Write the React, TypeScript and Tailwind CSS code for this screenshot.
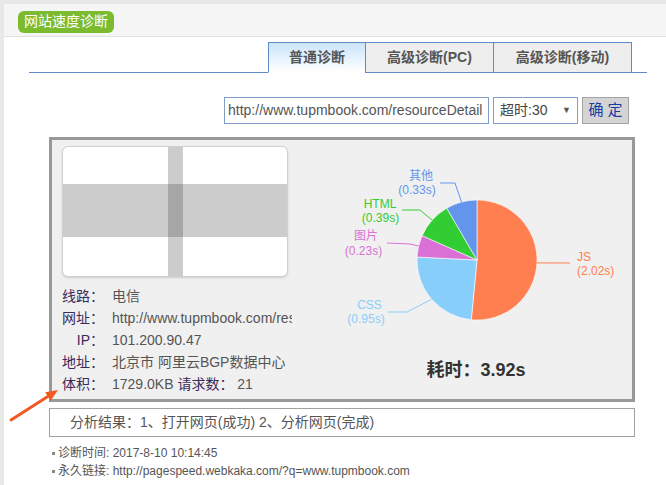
import React from 'react'

const FONT = "font-['Liberation_Sans','Noto_Sans_CJK_SC',sans-serif]"

const tabs = [
  { label: '普通诊断', width: 'w-[97px]', active: true },
  { label: '高级诊断(PC)', width: 'w-[128px]', active: false },
  { label: '高级诊断(移动)', width: 'w-[139px] border-r', active: false },
]

// pie slices, clockwise from 12 o'clock (center 147,110 r 60)
const slices = [
  { d: 'M147,110 L147,50 A60,60 0 1,1 141.25,169.72 Z', color: '#ff7f50' },
  { d: 'M147,110 L141.25,169.72 A60,60 0 0,1 87.07,107.07 Z', color: '#87cefa' },
  { d: 'M147,110 L87.07,107.07 A60,60 0 0,1 92.15,85.67 Z', color: '#da70d6' },
  { d: 'M147,110 L92.15,85.67 A60,60 0 0,1 116.76,58.18 Z', color: '#32cd32' },
  { d: 'M147,110 L116.76,58.18 A60,60 0 0,1 147,50 Z', color: '#6495ed' },
]

const labels = [
  { line: '131.5,52 125,33 110,33', color: '#6495ed', a: { x: 91, y: 30, t: '其他' }, b: { x: 87, y: 44, t: '(0.33s)' }, anchor: 'middle' },
  { line: '102,70 90,60 72,60', color: '#32cd32', a: { x: 50, y: 58, t: 'HTML' }, b: { x: 50.5, y: 72, t: '(0.39s)' }, anchor: 'middle' },
  { line: '88.6,96 80,94 57,93', color: '#da70d6', a: { x: 36, y: 90, t: '图片' }, b: { x: 33.5, y: 105, t: '(0.23s)' }, anchor: 'middle' },
  { line: '101.6,149.3 77,162 58,162', color: '#87cefa', a: { x: 39.5, y: 159, t: 'CSS' }, b: { x: 36, y: 173, t: '(0.95s)' }, anchor: 'middle' },
  { line: '206.9,112.9 240,113', color: '#ff7f50', a: { x: 247, y: 111, t: 'JS' }, b: { x: 247, y: 125, t: '(2.02s)' }, anchor: 'start' },
]

const PieChart: React.FC = () => (
  <svg width="290" height="200" viewBox="0 0 290 200" className="block">
    {slices.map((s, i) => (
      <path key={i} d={s.d} fill={s.color} stroke="#fff" strokeWidth="0.6" />
    ))}
    {labels.map((l, i) => (
      <g key={i} fill={l.color} fontSize="12" fontFamily="'Liberation Sans','Noto Sans CJK SC',sans-serif">
        <polyline points={l.line} fill="none" stroke={l.color} strokeWidth="1" />
        <text x={l.a.x} y={l.a.y} textAnchor={l.anchor}>{l.a.t}</text>
        <text x={l.b.x} y={l.b.y} textAnchor={l.anchor}>{l.b.t}</text>
      </g>
    ))}
  </svg>
)

const Thumb: React.FC = () => (
  <div className="w-[226px] h-[131px] rounded-[6px] border border-[#d0d0d0] bg-white overflow-hidden shadow-[0_1px_2px_rgba(0,0,0,0.15)]">
    <svg width="226" height="131" className="block">
      <rect x="0" y="37" width="226" height="53" fill="#cccccc" />
      <rect x="105" y="0" width="15" height="131" fill="#cccccc" />
      <rect x="105" y="37" width="15" height="53" fill="#a6a6a6" />
    </svg>
  </div>
)

const InfoRow: React.FC<{ label: string; children: React.ReactNode }> = ({ label, children }) => (
  <div className="flex items-center h-[22px] whitespace-nowrap">
    <span className="w-[42px] shrink-0 text-right text-[#3b2a5c]">{label}</span>
    <span className="ml-[8px] text-[#555]">{children}</span>
  </div>
)

const App: React.FC = () => {
  return (
    <div className={`relative w-[666px] h-[485px] overflow-hidden bg-[#e6e9e6] pt-[4px] pl-[4px] ${FONT}`}>
      <div className="h-full bg-white">
        <div className="h-[33px] bg-[#f5f5f5] border-b border-[#e0e0e0] pt-[5px] pl-[14px]">
          <span className="inline-flex items-center h-[22px] px-[6px] rounded-[6px] bg-[#7cba2e] text-white text-[14px]">
            网站速度诊断
          </span>
        </div>

        <div className="mt-[5px] ml-[25px] mr-[19px] flex justify-end pr-[15px] border-b border-[#5f8ac8]">
          {tabs.map(t => (
            <div
              key={t.label}
              className={`${t.width} h-[31px] -mb-px flex items-center justify-center border-t border-l border-b border-[#5f8ac8] text-[14px] font-bold text-[#555] ${
                t.active ? 'bg-gradient-to-b from-[#cbe4fb] to-white border-b-white' : 'bg-[#eeeeee]'
              }`}
            >
              {t.label}
            </div>
          ))}
        </div>

        <div className="mt-[24px] mr-[37px] flex justify-end">
          <div className="w-[265px] h-[27px] border border-[#7f9dc9] bg-white overflow-hidden flex items-center pl-[3px] text-[14px] text-[#555] whitespace-nowrap">
            http://www.tupmbook.com/resourceDetail
          </div>
          <div className="ml-[4px] w-[85px] h-[27px] border border-[#7f9dc9] bg-white flex items-center justify-between pl-[6px] pr-[6px] text-[14px] text-[#444]">
            <span>超时:30</span>
            <span className="text-[9px] text-[#555]">▼</span>
          </div>
          <div className="ml-[4px] w-[47px] h-[27px] border border-[#a3a3a3] bg-[#d4d4d4] flex items-center justify-center text-[15px] text-[#1a3aa5]">
            确 定
          </div>
        </div>

        <div className="mt-[13px] ml-[45px] w-[586px] h-[265px] border-[3px] border-[#999999] bg-[#f0f0f0] flex">
          <div className="w-[240px] shrink-0 pl-[10px] pt-[6px] overflow-hidden text-[14px]">
            <Thumb />
            <div className="mt-[8px]">
              <InfoRow label="线路：">电信</InfoRow>
              <InfoRow label="网址：">http://www.tupmbook.com/resourceDetail</InfoRow>
              <InfoRow label="IP：">101.200.90.47</InfoRow>
              <InfoRow label="地址：">北京市 阿里云BGP数据中心</InfoRow>
              <InfoRow label="体积：">
                1729.0KB <span className="text-[#3b2a5c]">请求数：</span> 21
              </InfoRow>
            </div>
          </div>
          <div className="ml-[38px] pt-[10px] flex flex-col">
            <PieChart />
            <div className="mt-[8px] w-[292px] text-center text-[18px] leading-[24px] font-bold text-[#333]">
              耗时：3.92s
            </div>
          </div>
        </div>

        <div className="mt-[6px] ml-[45px] w-[586px] h-[29px] border border-[#a0a0a0] bg-white flex items-center pl-[20px] text-[14px] text-[#555]">
          分析结果：1、打开网页(成功) 2、分析网页(完成)
        </div>

        <div className="mt-[7px] ml-[48px] text-[12px] leading-[18px] text-[#555]">
          <div className="flex items-center">
            <span className="w-[3px] h-[3px] bg-[#888] mr-[3px]" />
            诊断时间: 2017-8-10 10:14:45
          </div>
          <div className="flex items-center">
            <span className="w-[3px] h-[3px] bg-[#888] mr-[3px]" />
            永久链接: http://pagespeed.webkaka.com/?q=www.tupmbook.com
          </div>
        </div>
      </div>

      <svg className="absolute left-[8px] top-[385px]" width="55" height="40" viewBox="0 0 55 40">
        <line x1="3" y1="35" x2="41" y2="10.7" stroke="#f05a22" strokeWidth="3" strokeLinecap="round" />
        <polygon points="50,5 42.6,15.7 37.2,7.25" fill="#f05a22" />
      </svg>
    </div>
  )
}

export default App
